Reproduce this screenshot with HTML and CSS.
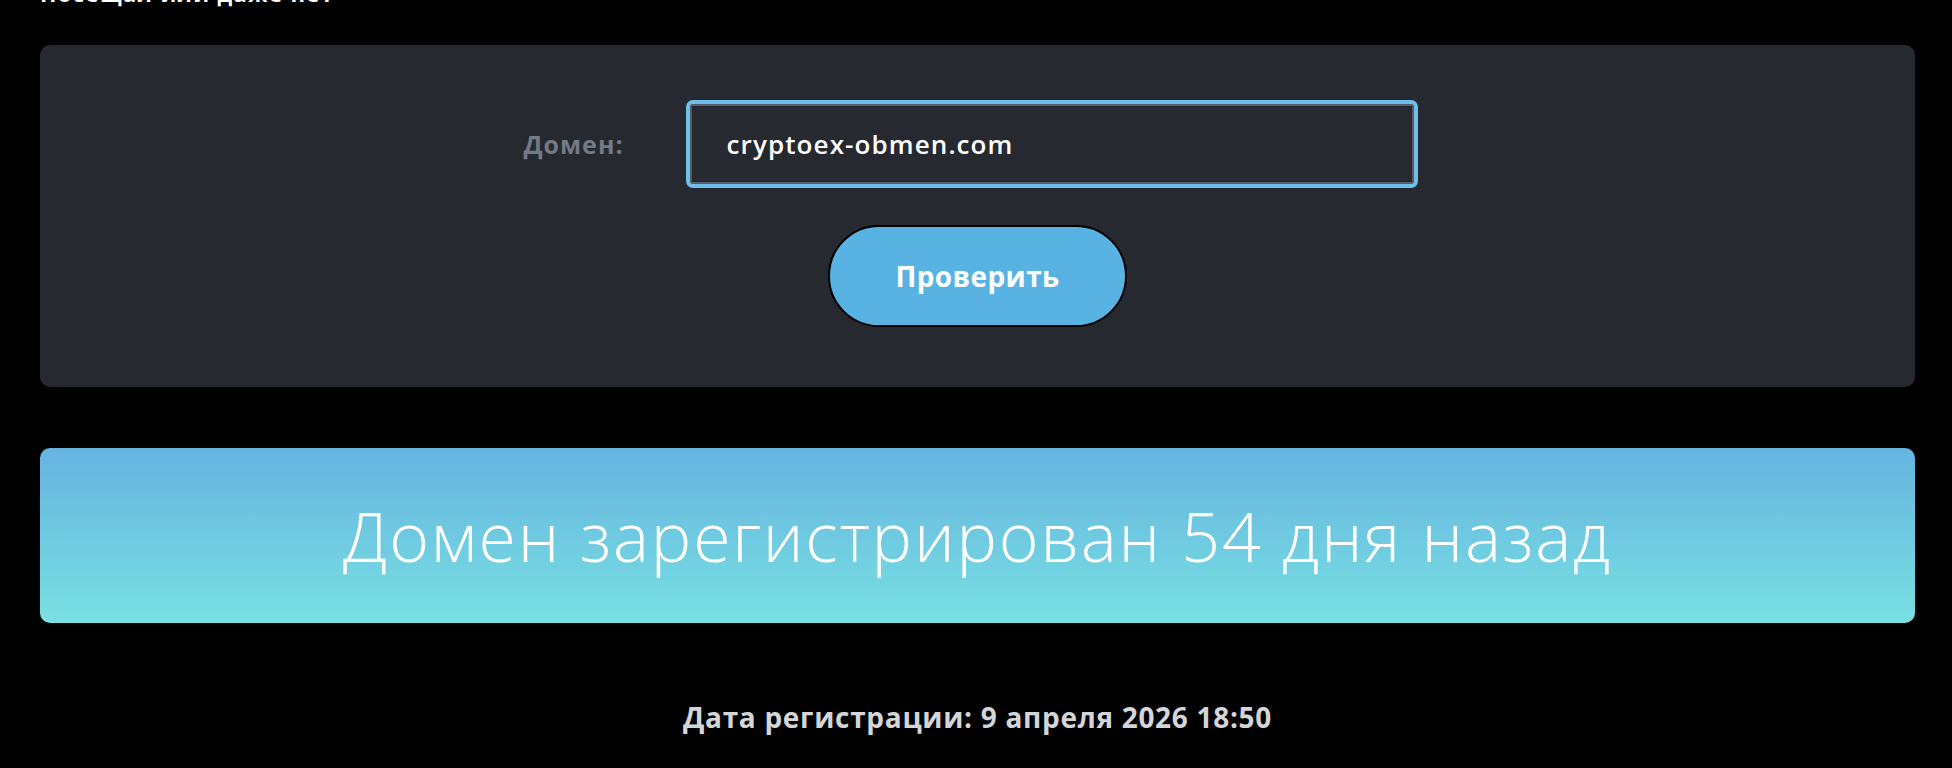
FILE: index.html
```html
<!DOCTYPE html>
<html lang="ru">
<head>
<meta charset="utf-8">
<title>Проверка домена</title>
<link rel="stylesheet" href="styles.css">
</head>
<body>
<main class="page">
  <p class="intro">Посещал или даже нет</p>

  <section class="check-card">
    <form class="check-form">
      <div class="field-row">
        <label class="field-label" for="domain">Домен:</label>
        <input class="field-input" id="domain" type="text" value="cryptoex-obmen.com">
      </div>
      <button class="check-btn" type="button">Проверить</button>
    </form>
  </section>

  <section class="result-banner">
    <h2 class="result-title">Домен зарегистрирован 54 дня назад</h2>
  </section>

  <p class="reg-date">Дата регистрации: 9 апреля 2026 18:50</p>
</main>
</body>
</html>
```

FILE: styles.css
```css
html, body {
  margin: 0;
  padding: 0;
  background: #000;
}

body {
  font-family: "Open Sans", "Noto Sans", sans-serif;
  color: #fff;
}

.page {
  width: 1875px;
  margin-left: 40px;
}

/* tail of the previous paragraph, scrolled mostly out of view */
.intro {
  margin: -18px 0 0;
  height: 22px;
  font-size: 22px;
  line-height: 22px;
  font-weight: 700;
  letter-spacing: 1.4px;
  color: #fff;
}

.check-card {
  margin-top: 41px;
  background: #26292f;
  border-radius: 10px;
  padding: 59px 0 60px;
}

.check-form {
  display: flex;
  flex-direction: column;
  align-items: center;
}

.field-row {
  display: flex;
  align-items: center;
  justify-content: center;
  padding-right: 18px;
}

.field-label {
  font-size: 25px;
  font-weight: 700;
  color: #737a86;
  letter-spacing: 1px;
  margin-right: 66px;
}

.field-input {
  box-sizing: border-box;
  width: 724px;
  height: 80px;
  padding: 0 35px;
  background: #26292f;
  border: 2px solid #585c64;
  border-radius: 3px;
  outline: 4px solid #6cc0ea;
  outline-offset: 0;
  font-family: inherit;
  font-size: 26px;
  font-weight: 600;
  letter-spacing: 1.1px;
  color: #fff;
}

.check-btn {
  box-sizing: border-box;
  margin-top: 41px;
  width: 299px;
  height: 102px;
  border: 2px solid #000;
  border-radius: 51px;
  background: #58b2e2;
  font-family: inherit;
  font-size: 28px;
  font-weight: 700;
  letter-spacing: 0.4px;
  color: #fff;
  cursor: pointer;
}

.result-banner {
  margin-top: 61px;
  height: 175px;
  border-radius: 10px;
  background: linear-gradient(180deg, #66b3e0 0%, #78e0e2 100%);
  display: flex;
  align-items: center;
  justify-content: center;
}

.result-title {
  margin: 0;
  font-size: 68px;
  font-weight: 300;
  letter-spacing: 1.8px;
  color: #fff;
}

.reg-date {
  margin: 72px 0 0;
  text-align: center;
  font-size: 28px;
  line-height: 44px;
  font-weight: 700;
  letter-spacing: 0.7px;
  color: #d3d5d9;
}
```
